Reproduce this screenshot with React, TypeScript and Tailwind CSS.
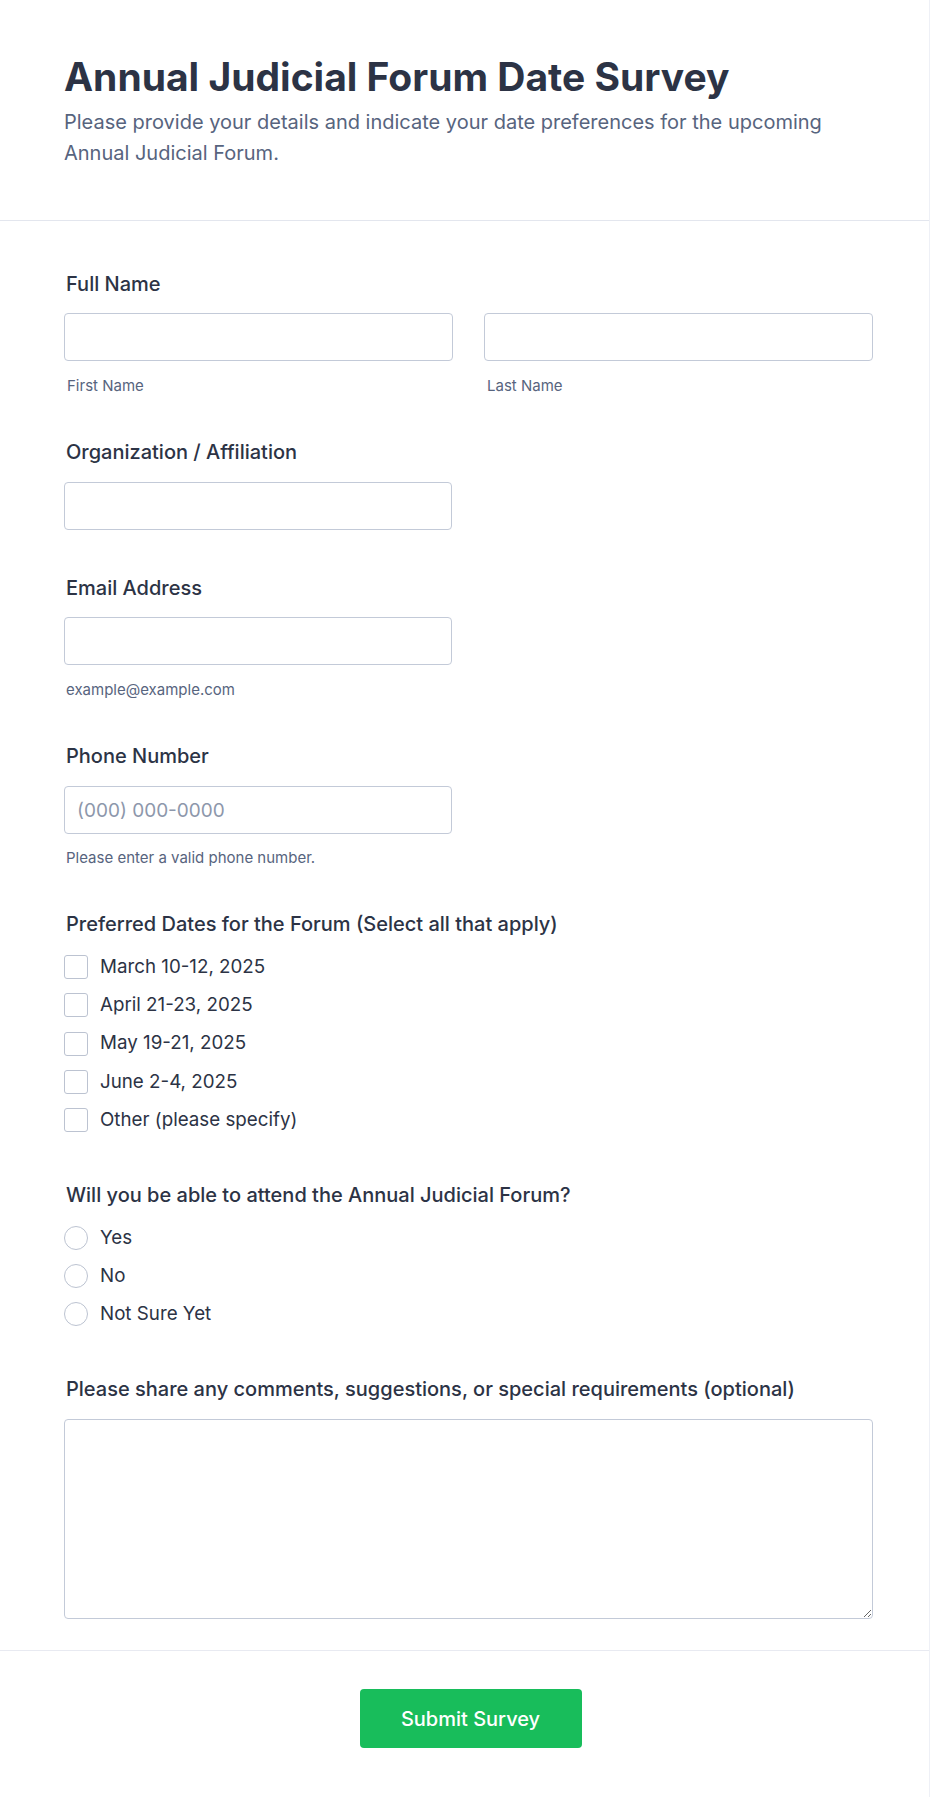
const dates = [
  "March 10-12, 2025",
  "April 21-23, 2025",
  "May 19-21, 2025",
  "June 2-4, 2025",
  "Other (please specify)",
];

const attendance = ["Yes", "No", "Not Sure Yet"];

function FieldLabel({ children }: { children: React.ReactNode }) {
  return (
    <label className="block pl-[2px] text-[20px] leading-6 font-medium text-[#2c3345]">
      {children}
    </label>
  );
}

function Helper({ children, className = "" }: { children: React.ReactNode; className?: string }) {
  return (
    <p className={`text-[15px] leading-5 text-[#57647e] ${className}`}>{children}</p>
  );
}

const inputClass =
  "block h-[48px] rounded-[4px] border border-[#c3cad8] bg-white px-3 text-[19px] text-[#2c3345] outline-none placeholder:text-[#8d97ab]";

export default function App() {
  return (
    <div className="min-h-screen bg-white font-['Inter','Noto_Sans',sans-serif] text-[#2c3345]">
      <div className="border-r border-b border-[#eef0f6]">
        <header className="border-b border-[#e3e6ee] pt-[54px] pr-14 pb-[51px] pl-16">
          <h1 className="text-[39px] leading-[46px] font-bold text-[#2c3345]">
            Annual Judicial Forum Date Survey
          </h1>
          <p className="mt-[7px] text-[20px] leading-[31px] text-[#57647e]">
            Please provide your details and indicate your date preferences for the upcoming
            Annual Judicial Forum.
          </p>
        </header>

        <form className="pt-[51px] pr-14 pb-[31px] pl-16" onSubmit={(e) => e.preventDefault()}>
          {/* full name */}
          <div>
            <FieldLabel>Full Name</FieldLabel>
            <div className="mt-[17px] grid grid-cols-2 gap-[31px]">
              <div>
                <input type="text" className={`${inputClass} w-full`} />
                <Helper className="mt-[15px] pl-[3px]">First Name</Helper>
              </div>
              <div>
                <input type="text" className={`${inputClass} w-full`} />
                <Helper className="mt-[15px] pl-[3px]">Last Name</Helper>
              </div>
            </div>
          </div>

          <div className="mt-[44px]">
            <FieldLabel>Organization / Affiliation</FieldLabel>
            <input type="text" className={`${inputClass} mt-[18px] w-[388px]`} />
          </div>

          <div className="mt-[46px]">
            <FieldLabel>Email Address</FieldLabel>
            <input type="email" className={`${inputClass} mt-[17px] w-[388px]`} />
            <Helper className="mt-[15px] pl-[2px]">example@example.com</Helper>
          </div>

          <div className="mt-[44px]">
            <FieldLabel>Phone Number</FieldLabel>
            <input
              type="tel"
              placeholder="(000) 000-0000"
              className={`${inputClass} mt-[18px] w-[388px]`}
            />
            <Helper className="mt-[14px] pl-[2px]">Please enter a valid phone number.</Helper>
          </div>

          <div className="mt-[44px]">
            <FieldLabel>Preferred Dates for the Forum (Select all that apply)</FieldLabel>
            <div className="mt-[19px] flex flex-col gap-[14.25px]">
              {dates.map((d) => (
                <label key={d} className="flex h-6 items-center gap-3 text-[18.75px] text-[#2c3345]">
                  <span className="h-6 w-6 shrink-0 rounded-[3px] border border-[#bcc3d1] bg-white" />
                  {d}
                </label>
              ))}
            </div>
          </div>

          <div className="mt-[51px]">
            <FieldLabel>Will you be able to attend the Annual Judicial Forum?</FieldLabel>
            <div className="mt-[19px] flex flex-col gap-[14px]">
              {attendance.map((a) => (
                <label key={a} className="flex h-6 items-center gap-3 text-[18.75px] text-[#2c3345]">
                  <span className="h-6 w-6 shrink-0 rounded-full border border-[#bcc3d1] bg-white" />
                  {a}
                </label>
              ))}
            </div>
          </div>

          <div className="mt-[51px]">
            <FieldLabel>
              Please share any comments, suggestions, or special requirements (optional)
            </FieldLabel>
            <textarea className="mt-[18px] block h-[200px] w-full rounded-[4px] border border-[#c3cad8] bg-white p-3 text-[19px] outline-none" />
          </div>
        </form>

        <div className="border-t border-[#e8eaf1] pt-[38px] pr-14 pb-[49px] pl-[68px]">
          <button
            type="submit"
            className="mx-auto block h-[59px] w-[222px] rounded-[4px] bg-[#18bd5b] text-[20px] font-medium text-white"
          >
            Submit Survey
          </button>
        </div>
      </div>
    </div>
  );
}
